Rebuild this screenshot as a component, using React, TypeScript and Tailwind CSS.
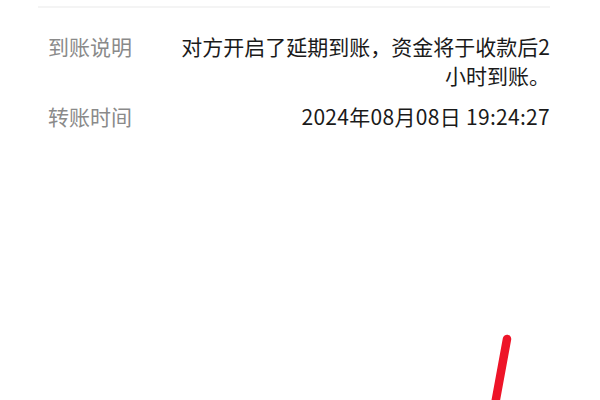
import React from "react";

export default function App() {
  return (
    <div
      className="relative w-[600px] h-[400px] bg-white overflow-hidden"
      style={{ fontFamily: '"Noto Sans CJK SC", "Noto Sans", sans-serif' }}
    >
      <div className="pl-[48px] pr-[50px]">
        <div className="mt-[6px] ml-[-10px] h-[2px] bg-[#f4f4f4]" />
        <div className="mt-[24px] flex justify-between text-[21px] leading-[29px]">
          <div className="text-[#8a8a8a] shrink-0">到账说明</div>
          <div className="text-right text-[#1a1a1a]">
            对方开启了延期到账，资金将于收款后2
            <br />
            小时到账。
          </div>
        </div>
        <div className="mt-[12px] flex justify-between text-[21px] leading-[29px]">
          <div className="text-[#8a8a8a] shrink-0">转账时间</div>
          <div className="text-right text-[#1a1a1a] tracking-[0.3px]">2024年08月08日 19:24:27</div>
        </div>
      </div>
      <svg
        className="absolute left-0 top-0"
        width="600"
        height="400"
        viewBox="0 0 600 400"
      >
        <line
          x1="507"
          y1="339"
          x2="494"
          y2="410"
          stroke="#ee1428"
          strokeWidth="8.5"
          strokeLinecap="round"
        />
      </svg>
    </div>
  );
}
